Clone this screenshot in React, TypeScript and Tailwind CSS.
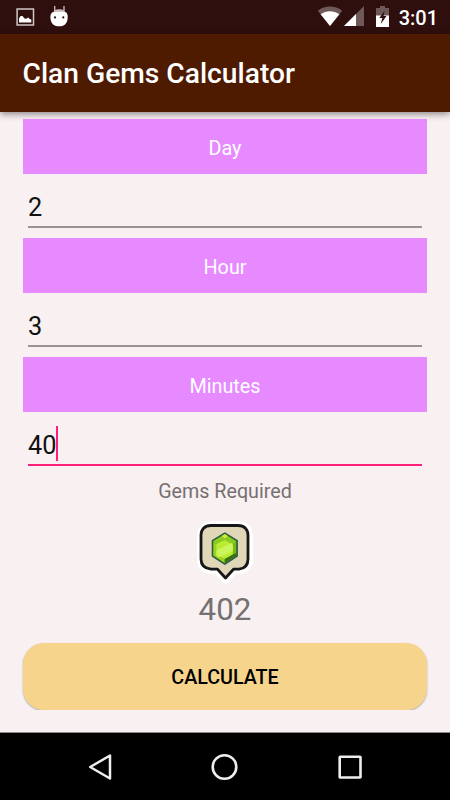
import { useState } from 'react';

interface Field {
    label: string;
    value: string;
}

const fields: Field[] = [
    { label: 'Day', value: '2' },
    { label: 'Hour', value: '3' },
    { label: 'Minutes', value: '40' },
];

function StatusBar() {
    return (
        <div className="flex h-[34px] shrink-0 items-center justify-between bg-[#2e0f0d] pl-[16px] pr-[12px]">
            <div className="flex items-center gap-[15px]">
                {/* Screenshot notification */}
                <svg width="19" height="18" viewBox="0 0 19 18">
                    <rect x="1.1" y="1" width="16.4" height="16" fill="none" stroke="#cfc6c6" strokeWidth="1.5" />
                    <path d="M3 14.5v-4L4.6 8 6.5 8l2 2.5 1.7.3 2-1.3 1.5 1.5 1.6.6v2.9z" fill="#fff" />
                </svg>
                {/* Android robot head */}
                <svg className="-mt-[3px]" width="18" height="22" viewBox="0 0 18 22">
                    <path d="M4.7 1v5M14 1v5" stroke="#cfc0c0" strokeWidth="1.3" />
                    <path d="M3.5 7.5C3.7 5.3 5.5 4.2 9.2 4.2s5.8 1.1 6 3.3z" fill="#cfc0c0" />
                    <path d="M.4 12C.4 9 1.5 7 3.8 7h10.8c2.300 0 3.100 2 3.100 5 0 6-2.900 9.300-8.600 9.300S.4 18 .4 12z" fill="#fff" />
                    <circle cx="5" cy="12.4" r="1.1" fill="#2e0f0d" />
                    <circle cx="13.3" cy="12.4" r="1.1" fill="#2e0f0d" />
                </svg>
            </div>
            <div className="flex items-center">
                <svg className="-mt-[2px]" width="26" height="20" viewBox="0 0 26 20">
                    <path d="M.8 4.800C8-.8 18-.8 25.200 4.800L13 20z" fill="#6f5858" />
                    <path d="M3.600 8.300c5.700-4 13.100-4 18.800 0L13 20z" fill="#fff" />
                </svg>
                <svg className="ml-[1px] -mt-[2px]" width="20" height="20" viewBox="0 0 20 20">
                    <path d="M20 0v20H0z" fill="#6f5858" />
                    <path d="M12 8v12H0z" fill="#fff" />
                </svg>
                <svg className="-mt-[2px] ml-[12px]" width="13" height="21" viewBox="0 0 13 21">
                    <path d="M4 0h5v2h4v8H0V2h4z" fill="#6f5858" />
                    <path d="M0 9.5h13V21H0z" fill="#fff" />
                    <path d="M8.500 5L3.300 12h3L4.800 18l5.700-8H7.500z" fill="#2e0f0d" />
                </svg>
                <span className="ml-[10px] mt-[1px] text-[20px] font-medium leading-none text-white">3:01</span>
            </div>
        </div>
    );
}

function GemBadge() {
    return (
        <svg className="shrink-0" width="60" height="66" viewBox="0 0 60 66">
            <path
                d="M17 6h26c7 0 11 4 11 11v24c0 6.500-4.500 10-11 10h-4.500L30.500 61l-8.500-10H17c-6.500 0-11-3.500-11-10V17C6 10 10.500 6 17 6z"
                fill="#fff"
                stroke="#fff"
                strokeWidth="8"
                strokeLinejoin="round"
            />
            <path
                d="M16 6.500h27c6.500 0 10 4 10 10V40c0 6-3.500 9.500-9 10.200h-5.500L30.500 59l-8-8.800H16C10 49.500 6 46 6 40V16.500c0-6 3.500-10 10-10z"
                fill="#e0d6b8"
                stroke="#171719"
                strokeWidth="2.800"
                strokeLinejoin="round"
            />
            <g transform="translate(-.2 1.600)">
                <path d="M30 12.500l12.300 7.500v15.500L30 43.500l-12.300-8V20z" fill="#79b911" stroke="#285b48" strokeWidth="1.600" strokeLinejoin="round" />
                <path d="M30 14l11 7-3 3-8-4.500-8.500 4-3-3z" fill="#8ccb20" />
                <path d="M18.700 21.500l3.300 3v10l7.500 4V42l-10.800-7z" fill="#9fd01b" />
                <path d="M21.500 23.500l8.500-4 8 4.500v10.500l-8 4-8.500-4z" fill="#b9ec35" />
                <path d="M22 29.500l15-7 1 2v6L24 37l-2.500-2z" fill="#cbf55c" />
                <path d="M38 34l3.300-1.500v3L30 42.500V38.500z" fill="#397012" />
                <path d="M30 13.500l3 2-3 2.300-3-2.300z" fill="#d5eb35" />
            </g>
        </svg>
    );
}

function NavBar() {
    return (
        <div className="flex h-[68px] shrink-0 items-center justify-between border-t border-[#8c8788] bg-black px-[87px]">
            <svg width="26" height="28" viewBox="0 0 26 28">
                <path d="M23 2.500v23L3.200 14z" fill="none" stroke="#eee" strokeWidth="2.500" strokeLinejoin="round" />
            </svg>
            <svg width="28" height="28" viewBox="0 0 28 28">
                <circle cx="13.500" cy="14" r="11.800" fill="none" stroke="#eee" strokeWidth="2.600" />
            </svg>
            <svg width="26" height="28" viewBox="0 0 26 28">
                <rect x="2.700" y="3.700" width="20.800" height="20.800" rx=".5" fill="none" stroke="#eee" strokeWidth="2.600" />
            </svg>
        </div>
    );
}

export default function App() {
    const [gems, setGems] = useState(402);

    return (
        <div className="flex h-[800px] w-[450px] flex-col overflow-hidden bg-[#f9f0f1] font-[Roboto,sans-serif]">
            <StatusBar />
            <header className="flex h-[78px] shrink-0 items-center bg-[#4e1b00] px-[22.5px] pt-[2px] shadow-[0_2px_7px_rgba(0,0,0,0.45)]">
                <h1 className="text-[28.2px] font-medium leading-none text-white">Clan Gems Calculator</h1>
            </header>

            <main className="flex grow flex-col px-[23px] pt-[7px]">
                {fields.map((field, i) => {
                    const focused = i === fields.length - 1;
                    return (
                        <div key={field.label} className="h-[119px] shrink-0">
                            <div className="flex h-[55px] items-center justify-center bg-[#e78aff] pt-[4px] text-[19.8px] leading-none text-white">
                                {field.label}
                            </div>
                            <div
                                className={`mx-[5px] flex items-center text-[25.3px] leading-none text-[#111] ${
                                    focused ? 'h-[54px] border-b-2 border-[#ff1f78] pt-[2px]' : 'h-[54px] border-b-2 border-[#999394] pt-[15px]'
                                }`}
                            >
                                <span className={focused ? 'mt-[13px]' : ''}>{field.value}</span>
                                {focused && <span className="mt-[9px] h-[35px] w-[2px] bg-[#ff1f78]" />}
                            </div>
                        </div>
                    );
                })}

                <div className="flex flex-col items-center text-[#757071]">
                    <p className="mt-[4px] text-[19.7px] leading-[24px]">Gems Required</p>
                    <div className="mt-[15px] h-[66px]">
                        <GemBadge />
                    </div>
                    <p className="mt-[7px] text-[31.3px] leading-[36px]">{gems}</p>
                </div>

                {/* Wrapper trims the button shadow at the bottom edge */}
                <div className="-mx-[4px] mt-[11px] h-[71px] shrink-0 overflow-hidden px-[4px] pt-[4px]">
                    <button
                        type="button"
                        onClick={() => setGems(402)}
                        className="h-[67px] w-full rounded-[21px] bg-[#f6d48b] pt-[2px] text-[19.7px] font-medium text-black shadow-[0_1px_2px_rgba(0,0,0,0.3)]"
                    >
                        CALCULATE
                    </button>
                </div>
            </main>

            <NavBar />
        </div>
    );
}
